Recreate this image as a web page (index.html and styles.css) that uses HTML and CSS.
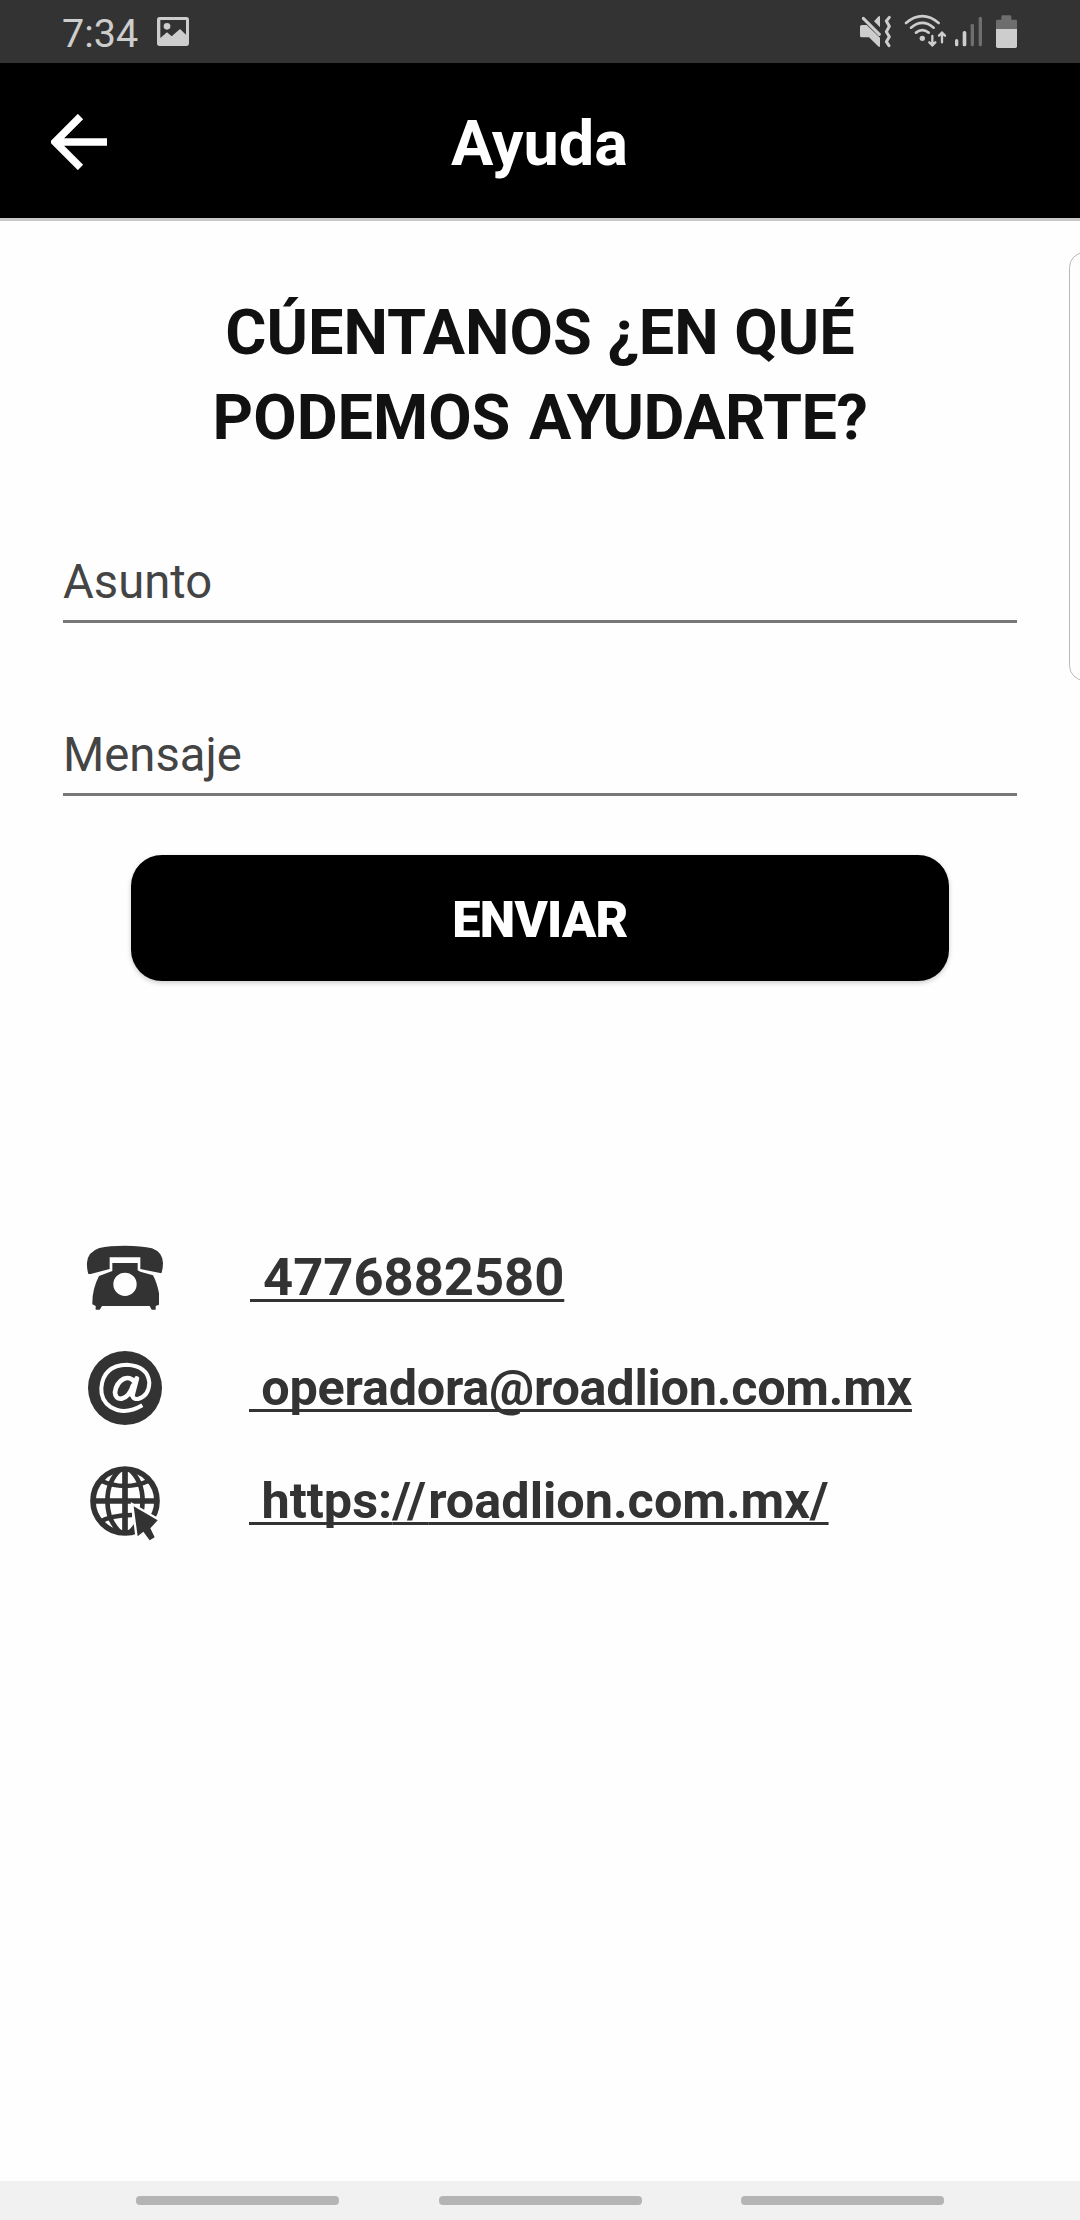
FILE: index.html
```html
<!doctype html>
<html lang="es">
<head>
  <meta charset="utf-8">
  <title>Ayuda</title>
  <meta name="viewport" content="width=device-width, initial-scale=1">
  <link rel="stylesheet" href="styles.css">
</head>
<body>
  <div class="status-bar">
    <span class="status-time">7:34</span>
    <svg class="status-picture" viewBox="474 51 96 87">
      <path fill="#cdcdcd" fill-rule="evenodd" d="M482 51H562Q570 51 570 59V130Q570 138 562 138H482Q474 138 474 130V59Q474 51 482 51ZM484 60V114L504 97L518 109L543 87L561 104V60Z"/>
      <circle cx="504" cy="79" r="10" fill="#cdcdcd"/>
    </svg>
    <svg class="status-icons" viewBox="180 0 480 189">
      <!-- muted / vibrate -->
      <g fill="#cdcdcd">
        <path d="M185 75H200L240 113V140H236L207 112H185Q180 112 180 107V80Q180 75 185 75Z"/>
        <path d="M222 64L236 49Q240 46 240 52V82Z"/>
      </g>
      <path d="M190 55L238 103" stroke="#cdcdcd" stroke-width="9" stroke-linecap="round"/>
      <path d="M268 52L259 63L268 79L259 95L268 110L259 125L267 137" fill="none" stroke="#cdcdcd" stroke-width="9" stroke-linecap="round" stroke-linejoin="round"/>
      <!-- wifi -->
      <g fill="none" stroke="#cdcdcd" stroke-width="8" stroke-linecap="round">
        <path d="M318 69Q367 28 416 69"/>
        <path d="M333 83Q367 54 401 83"/>
        <path d="M348 98Q367 83 386 98"/>
        <path stroke-width="7" d="M397 108V134M388 127L397 136L406 127M426 127V99M417 107L426 98L435 107"/>
      </g>
      <circle cx="367" cy="115" r="8" fill="#cdcdcd"/>
      <!-- signal -->
      <g fill="#cdcdcd">
        <rect x="465" y="117" width="10" height="22" rx="5"/>
        <rect x="488" y="93" width="11" height="46" rx="5"/>
        <rect x="512" y="71" width="10" height="68" rx="5" fill="#6e6e6e"/>
        <rect x="536" y="50" width="10" height="89" rx="5" fill="#6e6e6e"/>
      </g>
      <!-- battery -->
      <path fill="#6e6e6e" d="M588 87V63Q588 59 592 59H604V50Q604 46 608 46H630Q634 46 634 50V59H647Q651 59 651 63V87Z"/>
      <path fill="#cdcdcd" d="M588 87H651V139Q651 144 646 144H593Q588 144 588 139Z"/>
    </svg>
  </div>

  <header class="app-bar">
    <a class="back" href="#">
      <svg viewBox="0 0 56 56">
        <path d="M56 28H5M29.500 2.500L4 28L29.500 53.500" fill="none" stroke="#fff" stroke-width="7.500"/>
      </svg>
    </a>
    <h1 class="app-title">Ayuda</h1>
  </header>

  <main class="content">
    <h2 class="heading">CÚENTANOS ¿EN QUÉ<br><span class="wide-gap">PODEMOS <span class="tight">AYUDARTE?</span></span></h2>
    <form class="help-form">
      <input type="text" class="field" placeholder="Asunto">
      <input type="text" class="field" placeholder="Mensaje">
      <button type="button" class="send">ENVIAR</button>
    </form>

    <div class="contacts">
      <div class="contact contact-phone">
        <svg viewBox="0 -24 330 330" fill="#333">
          <path d="M51 98Q53 66 88 54Q118 47 165 47Q214 47 246 55Q278 67 279 99Q279 116 274 130L211 117V82H119V117L62 132H55Q50 116 51 98Z"/>
          <path fill-rule="evenodd" d="M127 99H203V121L211 125L249 136Q261 158 267 190V224L257 228V239H245L239 228H96L89 239H77V228L67 223Q66 178 87 138L127 123ZM165 128A35 35 0 1 0 165 198A35 35 0 1 0 165 128Z"/>
        </svg>
        <a href="#">&nbsp;4776882580</a>
      </div>
      <div class="contact contact-mail">
        <svg viewBox="0 6 330 330">
          <circle cx="165" cy="174" r="111" fill="#333"/>
          <g fill="none" stroke="#fff" stroke-linecap="round">
            <path stroke-width="12" stroke-linecap="butt" d="M217 226Q164 257 122 231Q92 211 94 174Q99 106 171 104Q234 108 238 158Q237 198 204 207Q182 208 188 184"/>
            <path stroke-width="14" d="M190 152Q180 140 162 146Q139 158 135 187Q136 208 155 206Q178 201 189 166"/>
            <path stroke-width="15" d="M200 146L187 195"/>
          </g>
        </svg>
        <a href="#">&nbsp;operadora@roadlion.com.mx</a>
      </div>
      <div class="contact">
        <svg viewBox="0 -15 330 330">
          <g fill="none" stroke="#333" stroke-width="17">
            <circle cx="165" cy="153" r="96"/>
            <path d="M165 55V251M67 153H263"/>
            <path stroke-width="14" d="M152 58C99 104 99 202 152 248M178 58C231 104 231 202 178 248"/>
            <path stroke-width="14" d="M88 90Q165 126 242 90M88 216Q122 196 186 195"/>
          </g>
          <path d="M191 169L203 259L220 245L239 271L254 262L241 235L263 211Z" fill="#333" stroke="#fefefe" stroke-width="14" paint-order="stroke"/>
        </svg>
        <a href="#">&nbsp;https:<span class="slashes">//</span>roadlion.com.mx/</a>
      </div>
    </div>
  </main>

  <div class="edge-panel"></div>

  <nav class="nav-bar">
    <span></span>
    <span></span>
    <span></span>
  </nav>
</body>
</html>
```

FILE: styles.css
```css
* {
  box-sizing: border-box;
}
body {
  margin: 0;
  height: 2220px;
  display: flex;
  flex-direction: column;
  position: relative;
  overflow: hidden;
  background: #fefefe;
  font-family: Roboto, "Liberation Sans", sans-serif;
}
svg {
  display: block;
  flex: none;
}
.status-bar {
  height: 63px;
  background: #333;
  display: flex;
  padding: 0 60px 0 62px;
}
.status-time {
  color: #cdcdcd;
  font-size: 39.500px;
  line-height: 67px;
}
.status-picture {
  width: 32px;
  height: 29px;
  margin: 17px 0 0 19px;
}
.status-icons {
  width: 160px;
  height: 63px;
  margin-left: auto;
}
.app-bar {
  height: 158px;
  background: #000;
  border-bottom: 3px solid #c8c8c8;
  display: flex;
  align-items: center;
  padding: 0 51px;
}
.back {
  width: 56px;
  margin-top: 2px;
}
.app-title {
  flex: 1;
  margin: 7px 57px 0 0;
  color: #fff;
  font-size: 63px;
  line-height: 76px;
  font-weight: 700;
  text-align: center;
}
.content {
  flex: 1;
  padding-top: 69px;
}
.heading {
  margin: 0 0 84px;
  color: #111;
  font-size: 63px;
  line-height: 85px;
  font-weight: 700;
  text-align: center;
}
.wide-gap {
  word-spacing: 3px;
}
.tight {
  letter-spacing: -0.500px;
}
.help-form {
  display: flex;
  flex-direction: column;
  padding: 0 63px;
}
.field {
  height: 79px;
  margin: 0 0 94px;
  padding: 0;
  border: none;
  border-bottom: 3px solid #777;
  outline: none;
  background: transparent;
  color: #444;
  font-family: inherit;
  font-size: 47.250px;
}
.field + .field {
  margin-bottom: 59px;
}
.field::placeholder {
  color: #444;
  opacity: 1;
}
.send {
  height: 126px;
  margin: 0 68px;
  padding: 2px 0 0;
  border: none;
  border-radius: 31px;
  background: #000;
  box-shadow: 0 2px 5px rgba(0,0,0,0.2);
  color: #fff;
  font-family: inherit;
  font-size: 50.400px;
  font-weight: 900;
  letter-spacing: -0.700px;
}
.contacts {
  margin-top: 241px;
  padding-left: 70px;
}
.contact {
  height: 113px;
  display: flex;
  gap: 69px;
}
.contact svg {
  width: 110px;
  height: 110px;
}
.contact a {
  color: #333;
  font-size: 50.400px;
  line-height: 111px;
  font-weight: 700;
  text-decoration: underline;
  text-decoration-thickness: 2.500px;
  text-decoration-skip-ink: none;
  text-underline-offset: 4px;
}
.contact-phone {
  height: 110px;
  gap: 70px;
}
.contact-phone a {
  font-size: 52.500px;
  line-height: 110px;
}
.contact-mail a {
  letter-spacing: -0.250px;
}
.slashes {
  letter-spacing: 2.200px;
}
.edge-panel {
  position: absolute;
  top: 252px;
  right: -20px;
  width: 31px;
  height: 429px;
  border: 1.500px solid #b8b8b8;
  border-radius: 16px;
}
.nav-bar {
  height: 39px;
  background: #f1f1f1;
  display: flex;
  justify-content: space-between;
  align-items: center;
  padding: 0 136px;
}
.nav-bar span {
  width: 203px;
  height: 9px;
  border-radius: 4px;
  background: #b4b4b4;
}
```
